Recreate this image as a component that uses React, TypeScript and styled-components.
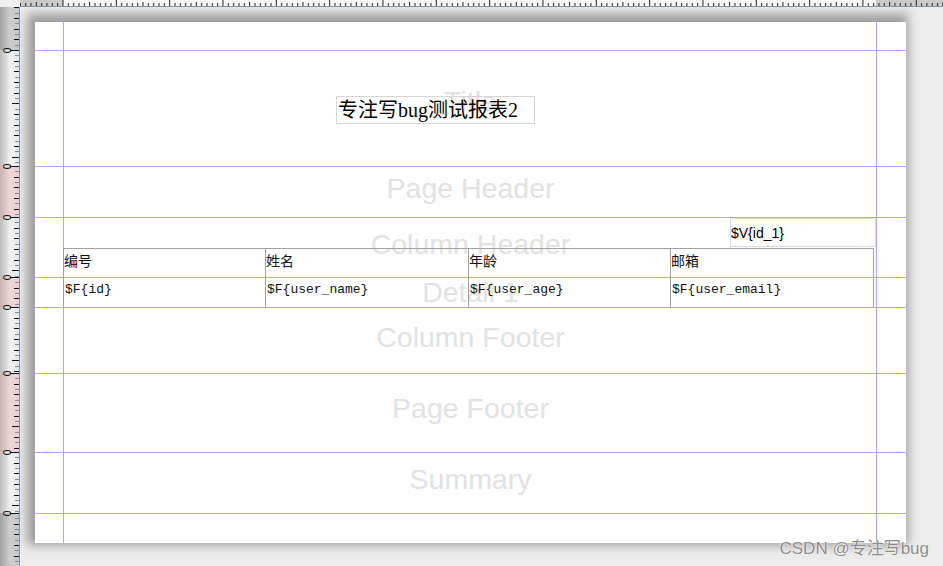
import styled, { createGlobalStyle } from 'styled-components';

const GlobalStyle = createGlobalStyle`
  html, body {
    margin: 0;
    padding: 0;
    background: #ececec;
    overflow: hidden;
  }
`;

// report bands, heights include the 1px band line below each one
const bands = [
  { key: 'top', label: '', h: 29, tint: 'margin', lift: 0 },
  { key: 'title', label: 'Title', h: 116, tint: '', lift: 14 },
  { key: 'ph', label: 'Page Header', h: 51, tint: 'pink', lift: 8 },
  { key: 'ch', label: 'Column Header', h: 60, tint: '', lift: 7 },
  { key: 'detail', label: 'Detail 1', h: 30, tint: 'pink', lift: 6 },
  { key: 'cf', label: 'Column Footer', h: 66, tint: '', lift: 6 },
  { key: 'pf', label: 'Page Footer', h: 79, tint: 'pink', lift: 9 },
  { key: 'summary', label: 'Summary', h: 61, tint: '', lift: 8 },
  { key: 'bottom', label: '', h: 29, tint: 'margin', lift: 0 },
];

const headers = ['编号', '姓名', '年龄', '邮箱'];
const fields = ['id', 'user_name', 'user_age', 'user_email'];

const Shell = styled.div`
  position: relative;
  display: grid;
  grid-template-columns: 20px 1fr;
  grid-template-rows: 7px 1fr;
  width: 943px;
  height: 566px;
  overflow: hidden;
  background: #ececec;
  font-family: 'Liberation Sans', Arial, sans-serif;
`;

const Corner = styled.div`
  background: #efefef;
`;

const RulerSvg = styled.svg`
  display: block;
`;

const Canvas = styled.div`
  padding: 15px 0 0 15px;
  overflow: hidden;
`;

const Page = styled.div`
  position: relative;
  width: 871px;
  height: 521px;
  background: #fff;
  box-shadow: -3px -3px 10px 5px rgba(0, 0, 0, 0.34);
  display: flex;
  flex-direction: column;
`;

const Guide = styled.div<{ $x: number }>`
  position: absolute;
  top: 0;
  bottom: 0;
  left: ${({ $x }) => $x}px;
  width: 1px;
  background: #a9a9f7;
`;

const Band = styled.div<{ $h: number; $last?: boolean }>`
  position: relative;
  z-index: 1;
  display: grid;
  box-sizing: border-box;
  height: ${({ $h }) => $h}px;
  border-bottom: ${({ $last }) => ($last ? 'none' : '1px solid #a9a9f7')};
  > * {
    grid-area: 1 / 1;
  }
`;

const BandLabel = styled.div<{ $lift: number }>`
  align-self: center;
  justify-self: center;
  margin-bottom: ${({ $lift }) => $lift}px;
  font-size: 28.5px;
  line-height: 1;
  color: #e2e2e2;
  white-space: nowrap;
`;

const TitleField = styled.div`
  align-self: start;
  justify-self: start;
  margin: 45px 0 0 301px;
  box-sizing: border-box;
  width: 199px;
  height: 28px;
  border: 1px solid #d6d6d6;
  padding-left: 1px;
  font-family: 'Liberation Serif', 'Noto Sans CJK SC', serif;
  font-size: 20px;
  line-height: 26px;
  color: #000;
  white-space: nowrap;
`;

const Stack = styled.div`
  align-self: start;
  display: flex;
  flex-direction: column;
  gap: 1px;
  padding-left: 28px;
`;

const VarField = styled.div`
  margin-left: 667px;
  box-sizing: border-box;
  width: 146px;
  height: 29px;
  border: 1px solid #dcdcdc;
  display: flex;
  align-items: center;
  font-size: 14px;
  color: #000;
`;

const TableRow = styled.div<{ $head?: boolean }>`
  display: grid;
  grid-template-columns: 202px 203px 202px 203px;
  box-sizing: border-box;
  width: 811px;
  height: 29px;
  border-top: ${({ $head }) => ($head ? '1px solid #a2a2a2' : 'none')};
  border-right: 1px solid #a2a2a2;
`;

const Cell = styled.div<{ $mono?: boolean }>`
  border-left: 1px solid #a2a2a2;
  padding: ${({ $mono }) => ($mono ? '3px 0 0 1px' : '3px 0 0 0')};
  font-family: ${({ $mono }) =>
    $mono
      ? "'Liberation Mono', 'Noto Sans CJK SC', monospace"
      : "'Noto Sans CJK SC', sans-serif"};
  font-size: ${({ $mono }) => ($mono ? 13 : 14)}px;
  line-height: 17px;
  color: #111;
  white-space: nowrap;
  overflow: hidden;
`;

const Watermark = styled.div`
  position: absolute;
  right: 14px;
  bottom: 7px;
  font-family: 'Liberation Sans', 'Noto Sans CJK SC', sans-serif;
  font-size: 17px;
  color: #8c8c8c;
  text-shadow: 0 0 2px #fff, 0 0 1px #fff;
  white-space: nowrap;
`;

const STEP = 5.333;

const TopRuler = () => {
  const origin = 43;
  const ticks = [];
  for (let i = -8; i < 166; i++) {
    const x = origin + i * STEP;
    const len = i % 10 === 0 ? 6 : i % 5 === 0 ? 4 : 3;
    ticks.push(
      <line key={i} x1={x} x2={x} y1={6 - len} y2={6} stroke="#222" strokeWidth={1} />
    );
  }
  return (
    <RulerSvg width={923} height={7}>
      <rect width={923} height={7} fill="#f8f8f8" />
      <rect width={43} height={7} fill="#cacaca" />
      <rect x={856} width={67} height={7} fill="#cacaca" />
      {ticks}
      <line x1={0} x2={923} y1={6.5} y2={6.5} stroke="#7f95ae" />
    </RulerSvg>
  );
};

const LeftRuler = () => {
  // band lines in ruler coords (ruler starts at y=7, page at y=22)
  const lines: number[] = [];
  let acc = 15;
  bands.forEach((b) => {
    acc += b.h;
    lines.push(acc - 1);
  });
  lines.pop();
  const segments: { y0: number; y1: number; tint: string }[] = [];
  let start = 0;
  bands.forEach((b, i) => {
    const end = i < lines.length ? lines[i] : 559;
    segments.push({ y0: start, y1: end, tint: b.tint });
    start = end;
  });

  const tick = (key: string, y: number, k: number) => {
    const long = k % 10 === 0;
    const len = long ? 7 : k % 2 === 0 ? 5 : 4;
    return (
      <line
        key={key}
        x1={19 - len}
        x2={19}
        y1={y}
        y2={y}
        stroke={long || k % 2 === 0 ? '#111' : '#8a8a8a'}
      />
    );
  };

  const ticks = [];
  // top margin counts upward from the first line
  for (let k = 1; lines[0] - k * STEP > 0; k++) {
    ticks.push(tick(`u${k}`, Math.round(lines[0] - k * STEP) + 0.5, k));
  }
  lines.forEach((y, i) => {
    const next = i + 1 < lines.length ? lines[i + 1] : 559;
    for (let k = 1; y + k * STEP < next - 1; k++) {
      ticks.push(tick(`d${i}-${k}`, Math.round(y + k * STEP) + 0.5, k));
    }
  });

  return (
    <RulerSvg width={20} height={559}>
      <defs>
        <linearGradient id="rulerBg" x1="0" x2="1" y1="0" y2="0">
          <stop offset="0" stopColor="#bcbcbc" />
          <stop offset="0.5" stopColor="#f0f0f0" />
          <stop offset="1" stopColor="#e9e9e9" />
        </linearGradient>
      </defs>
      <rect width={20} height={559} fill="url(#rulerBg)" />
      {segments.map((s, i) =>
        s.tint ? (
          <rect
            key={i}
            y={s.y0}
            width={19}
            height={s.y1 - s.y0}
            fill={s.tint === 'pink' ? 'rgba(240,150,150,0.28)' : 'rgba(0,0,0,0.14)'}
          />
        ) : null
      )}
      {ticks}
      {lines.map((y, i) => (
        <g key={i}>
          <line x1={10} x2={19} y1={y + 0.5} y2={y + 0.5} stroke="#111" />
          <text
            transform={`translate(3, ${y + 0.5}) rotate(90)`}
            textAnchor="middle"
            fontSize={10}
            fontFamily="'DejaVu Sans', sans-serif"
            fill="#111"
          >
            0
          </text>
        </g>
      ))}
      <line x1={19.5} x2={19.5} y1={0} y2={559} stroke="#7f95ae" />
    </RulerSvg>
  );
};

const bandContent: Record<string, JSX.Element> = {
  title: <TitleField>专注写bug测试报表2</TitleField>,
  ch: (
    <Stack>
      <VarField>{'$V{id_1}'}</VarField>
      <TableRow $head>
        {headers.map((h) => (
          <Cell key={h}>{h}</Cell>
        ))}
      </TableRow>
    </Stack>
  ),
  detail: (
    <Stack>
      <TableRow>
        {fields.map((f) => (
          <Cell key={f} $mono>{`$F{${f}}`}</Cell>
        ))}
      </TableRow>
    </Stack>
  ),
};

const App = () => {
  return (
    <>
      <GlobalStyle />
      <Shell>
        <Corner />
        <TopRuler />
        <LeftRuler />
        <Canvas>
          <Page>
            <Guide $x={28} />
            <Guide $x={841} />
            {bands.map((b) => (
              <Band key={b.key} $h={b.h} $last={b.key === 'bottom'}>
                {b.label && <BandLabel $lift={b.lift}>{b.label}</BandLabel>}
                {bandContent[b.key]}
              </Band>
            ))}
          </Page>
        </Canvas>
        <Watermark>CSDN @专注写bug</Watermark>
      </Shell>
    </>
  );
};

export default App;
